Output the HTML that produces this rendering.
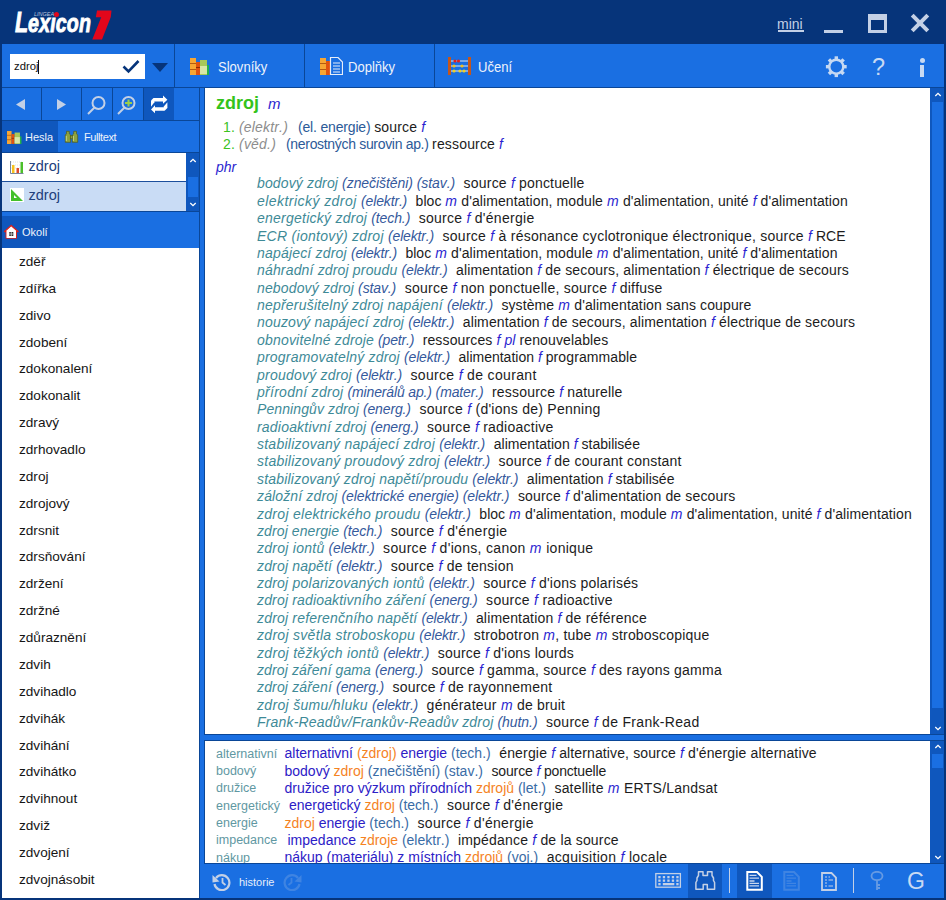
<!DOCTYPE html>
<html><head><meta charset="utf-8"><title>Lexicon 7</title><style>
*{margin:0;padding:0;box-sizing:border-box}
html,body{width:946px;height:900px;overflow:hidden;background:#06347a;font-family:"Liberation Sans",sans-serif;font-kerning:none}
.a{position:absolute}
.t{position:absolute;white-space:pre;line-height:17px}
i{font-style:italic}
.g{color:#2b1fd0;font-style:italic}
.ph{color:#3e8a97;font-style:italic}
.dm{color:#35599c;font-style:italic}
.tr{color:#1c1c1c}
.gap{display:inline-block;width:8.5px}
.bl{color:#5f98a2}
.sn{color:#3cc21f}
.sg{color:#8d8d8d;font-style:italic}
.sd{color:#2c5a98}
.be{color:#2c20c6}
.or{color:#f5831f}
.bd{color:#3a6ca6}
</style></head><body>
<div class="a" style="left:0;top:0;width:946px;height:44px;background:#06347a"></div>
<div class="a" style="left:14.5px;top:4px;font:italic bold 29px/36px 'Liberation Sans';color:#fff;-webkit-text-stroke:0.9px #fff;transform:scaleX(0.74);transform-origin:0 0;white-space:nowrap">L<span style="font-size:26.5px;letter-spacing:0.2px">exıcon</span></div>
<svg class="a" style="left:90px;top:8px" width="24" height="34" viewBox="90 8 24 34"><path d="M97 10.5H111.5L110.8 17L102 39.5H92.3L101.2 17.2H95.8Z" fill="#e3061b"/></svg>
<div class="a" style="left:53.5px;top:11.5px;width:5px;height:5px;border-radius:3px;background:#e3061b"></div>
<div class="a" style="left:34px;top:11px;font:italic 5.5px/6px 'Liberation Sans';color:#b8c4dc">LINGEA</div>
<div class="a" style="left:777px;top:16px;font:14px/16px 'Liberation Sans';color:#c3d0e6">mini</div>
<div class="a" style="left:778px;top:30px;width:26px;height:2px;background:#c3d0e6"></div>
<div class="a" style="left:824px;top:30px;width:19px;height:3px;background:#c3d0e6"></div>
<div class="a" style="left:868px;top:14px;width:19px;height:19px;border:3px solid #c3d0e6;border-top-width:6px"></div>
<svg class="a" style="left:910px;top:13px" width="20" height="20" viewBox="0 0 20 20"><path d="M2.2 2.2L17.8 17.8M17.8 2.2L2.2 17.8" stroke="#c3d0e6" stroke-width="4"/></svg>
<div class="a" style="left:2px;top:44px;width:942px;height:43px;background:#1a6fe2"></div>
<div class="a" style="left:2px;top:87px;width:942px;height:1px;background:#0a4697"></div>
<div class="a" style="left:10px;top:54px;width:135px;height:25px;background:#fff"></div>
<div class="t" style="left:14px;top:57.5px;font-size:11.3px;color:#111">zdroj</div>
<div class="a" style="left:38px;top:60px;width:1px;height:14px;background:#111"></div>
<svg class="a" style="left:122px;top:59px" width="18" height="15" viewBox="0 0 18 15"><path d="M1.5 7.5L6.5 12.5L16.5 2" fill="none" stroke="#06347a" stroke-width="2.6"/></svg>
<svg class="a" style="left:152px;top:63px" width="16" height="9" viewBox="0 0 16 9"><path d="M0 0H16L8 9Z" fill="#06347a"/></svg>
<div class="a" style="left:174px;top:44px;width:1px;height:43px;background:#0a4697"></div>
<div class="a" style="left:304px;top:44px;width:1px;height:43px;background:#0a4697"></div>
<div class="a" style="left:434px;top:44px;width:1px;height:43px;background:#0a4697"></div>
<div class="a" style="left:174px;top:88px;width:1px;height:33px;background:#0a4697"></div>
<svg class="a" style="left:190px;top:58px" width="21" height="17" viewBox="0 0 21 17"><rect x="0" y="0" width="6" height="17" fill="#f7a633"/><rect x="0" y="5" width="6" height="1" fill="#b55a10"/><rect x="0" y="11" width="6" height="1" fill="#b55a10"/><rect x="6" y="4" width="4" height="13" fill="#e0520f"/><rect x="6" y="9" width="4" height="1" fill="#8a2a05"/><rect x="10" y="2" width="7" height="15" fill="#a8c85a"/><rect x="10" y="8" width="7" height="8" fill="#d8e6a8"/><rect x="17" y="7" width="2" height="10" fill="#24b04a"/></svg>
<div class="t" style="left:218px;top:58.3px;font-size:15px;color:#eef3fb;transform:scaleX(0.87);transform-origin:0 0">Slovníky</div>
<svg class="a" style="left:320px;top:57px" width="23" height="18" viewBox="0 0 23 18"><rect x="0" y="1" width="6" height="17" fill="#f7a633"/><rect x="0" y="6" width="6" height="1" fill="#b55a10"/><rect x="0" y="12" width="6" height="1" fill="#b55a10"/><rect x="6" y="4" width="5" height="14" fill="#e0520f"/><path d="M10.5 0.5H18L22.5 5V17.5H10.5Z" fill="#1a6fe2" stroke="#e8eef8" stroke-width="1.2"/><path d="M13 6H20M13 9H20M13 12H20M13 15H20" stroke="#e8eef8" stroke-width="1"/></svg>
<div class="t" style="left:348px;top:58.3px;font-size:15px;color:#eef3fb;transform:scaleX(0.87);transform-origin:0 0">Doplňky</div>
<svg class="a" style="left:448px;top:57px" width="23" height="18" viewBox="0 0 23 18"><rect x="0" y="0" width="3" height="18" fill="#c4561c"/><rect x="20" y="0" width="3" height="18" fill="#c4561c"/><path d="M3 4H20M3 9H20M3 14H20" stroke="#dfe6f0" stroke-width="1"/><circle cx="7" cy="4" r="1.6" fill="#e02020"/><circle cx="10.5" cy="4" r="1.6" fill="#e02020"/><circle cx="6" cy="9" r="1.6" fill="#f0c020"/><circle cx="14" cy="9" r="1.6" fill="#f0c020"/><circle cx="6" cy="14" r="1.6" fill="#f0d020"/><circle cx="12" cy="14" r="1.6" fill="#f0d020"/><circle cx="16" cy="14" r="1.6" fill="#f0d020"/></svg>
<div class="t" style="left:478px;top:58.3px;font-size:15px;color:#eef3fb;transform:scaleX(0.87);transform-origin:0 0">Učení</div>
<svg class="a" style="left:822px;top:52px" width="30" height="30" viewBox="822 52 30 30"><g fill="#c6d9f3"><rect x="834.6" y="56.3" width="3.4" height="4" transform="rotate(0 836.3 66.7)"/><rect x="834.6" y="56.3" width="3.4" height="4" transform="rotate(45 836.3 66.7)"/><rect x="834.6" y="56.3" width="3.4" height="4" transform="rotate(90 836.3 66.7)"/><rect x="834.6" y="56.3" width="3.4" height="4" transform="rotate(135 836.3 66.7)"/><rect x="834.6" y="56.3" width="3.4" height="4" transform="rotate(180 836.3 66.7)"/><rect x="834.6" y="56.3" width="3.4" height="4" transform="rotate(225 836.3 66.7)"/><rect x="834.6" y="56.3" width="3.4" height="4" transform="rotate(270 836.3 66.7)"/><rect x="834.6" y="56.3" width="3.4" height="4" transform="rotate(315 836.3 66.7)"/></g><circle cx="836.3" cy="66.7" r="7" fill="none" stroke="#c6d9f3" stroke-width="2.4"/></svg>
<div class="t" style="left:872px;top:54px;font:23.5px/26px 'Liberation Sans';color:#c8daf3">?</div>
<div class="a" style="left:919.5px;top:57.5px;width:5.5px;height:5.5px;border-radius:3px;background:#c8daf3"></div>
<div class="a" style="left:920.3px;top:65px;width:4.2px;height:11.5px;background:#c8daf3"></div>
<div class="a" style="left:2px;top:88px;width:942px;height:810px;background:#1a6fe2"></div>
<div class="a" style="left:2px;top:88px;width:198px;height:810px;background:#1a6fe2"></div>
<div class="a" style="left:199px;top:88px;width:1px;height:810px;background:#0a4697"></div>
<div class="a" style="left:41px;top:88px;width:1px;height:33px;background:#0a4697"></div>
<div class="a" style="left:81px;top:88px;width:1px;height:33px;background:#0a4697"></div>
<div class="a" style="left:112px;top:88px;width:1px;height:33px;background:#0a4697"></div>
<div class="a" style="left:143px;top:88px;width:1px;height:33px;background:#0a4697"></div>
<div class="a" style="left:144px;top:88px;width:30px;height:32px;background:#0f57bd"></div>
<div class="a" style="left:2px;top:120px;width:197px;height:1px;background:#0a4697"></div>
<svg class="a" style="left:16px;top:99px" width="9" height="11" viewBox="0 0 9 11"><path d="M9 0V11L0 5.5Z" fill="#c3d0e6"/></svg>
<svg class="a" style="left:57px;top:99px" width="9" height="11" viewBox="0 0 9 11"><path d="M0 0V11L9 5.5Z" fill="#c3d0e6"/></svg>
<svg class="a" style="left:86px;top:95px" width="20" height="20" viewBox="0 0 20 20"><circle cx="12.5" cy="8" r="6" fill="none" stroke="#c3d0e6" stroke-width="2"/><path d="M8.5 12.5L2 19" stroke="#c3d0e6" stroke-width="2"/></svg>
<svg class="a" style="left:116px;top:95px" width="20" height="20" viewBox="0 0 20 20"><circle cx="12.5" cy="8" r="6" fill="none" stroke="#c3d0e6" stroke-width="2"/><path d="M8.5 12.5L2 19" stroke="#c3d0e6" stroke-width="2"/><path d="M12.5 4.5V11.5M9 8H16" stroke="#9ccf4a" stroke-width="2"/></svg>
<svg class="a" style="left:144px;top:90px" width="30" height="30" viewBox="144 90 30 30"><g fill="#fff"><path d="M154 98H163V95.6L167.4 99.7L163 103.8V101.4H154Z"/><path d="M151 100.5L153.5 98H154.4V102.3L151 106.7Z"/><path d="M164 107.2H155V105.2L151 109.4L155 113.2V110.8H164Z"/><path d="M167.4 102.3V108L164.6 110.8H163.8V106.6Z"/></g></svg>
<div class="a" style="left:2px;top:121px;width:56px;height:31px;background:#0f57bd"></div>
<svg class="a" style="left:7px;top:131px" width="16" height="13" viewBox="0 0 21 17"><rect x="0" y="0" width="6" height="17" fill="#f7a633"/><rect x="0" y="5" width="6" height="1" fill="#b55a10"/><rect x="0" y="11" width="6" height="1" fill="#b55a10"/><rect x="6" y="4" width="4" height="13" fill="#e0520f"/><rect x="6" y="9" width="4" height="1" fill="#8a2a05"/><rect x="10" y="2" width="7" height="15" fill="#a8c85a"/><rect x="10" y="8" width="7" height="8" fill="#d8e6a8"/><rect x="17" y="7" width="2" height="10" fill="#24b04a"/></svg>
<div class="t" style="left:25px;top:129px;font-size:11px;color:#eef3fb">Hesla</div>
<svg class="a" style="left:64px;top:130px" width="15" height="14" viewBox="64 130 15 14"><g fill="#8fa23e" stroke="#4d5a1c" stroke-width="0.7"><path d="M66.5 131.3H69.3V133.8L70.6 135V142.3H65.3V135L66.5 133.8Z"/><path d="M73.7 131.3H76.5V133.8L77.7 135V142.3H72.4V135L73.7 133.8Z"/><rect x="70.3" y="135.8" width="2.4" height="3"/></g><path d="M66.3 136V141M73.4 136V141" stroke="#c8d890" stroke-width="0.9"/></svg>
<div class="t" style="left:84px;top:129px;font-size:11px;color:#eef3fb;letter-spacing:-0.4px">Fulltext</div>
<div class="a" style="left:2px;top:152px;width:197px;height:1px;background:#0a4697"></div>
<div class="a" style="left:2px;top:153px;width:184px;height:28px;background:#fff"></div>
<div class="a" style="left:2px;top:181px;width:184px;height:1px;background:#1c4f9c"></div>
<div class="a" style="left:2px;top:182px;width:184px;height:29px;background:#c9dcf5"></div>
<div class="a" style="left:2px;top:211px;width:197px;height:1px;background:#0a4697"></div>
<div class="a" style="left:186px;top:153px;width:13px;height:58px;background:#0f57bd"></div>
<div class="a" style="left:187.5px;top:177px;width:10.5px;height:20px;background:#1a6fe2"></div>
<svg class="a" style="left:189px;top:158px" width="8" height="5" viewBox="0 0 8 5"><path d="M1.3 4L4 1.3L6.7 4" fill="none" stroke="#fff" stroke-width="1.3"/></svg>
<svg class="a" style="left:189px;top:202px" width="8" height="5" viewBox="0 0 8 5"><path d="M1.3 1L4 3.7L6.7 1" fill="none" stroke="#fff" stroke-width="1.3"/></svg>
<svg class="a" style="left:10px;top:160px" width="14" height="14" viewBox="0 0 14 14"><path d="M1 2H13M1 5H13M1 8H13" stroke="#d5dbe3" stroke-width="0.8" stroke-dasharray="1 1"/><rect x="2" y="5" width="2.5" height="8" fill="#f7c21c"/><rect x="6.5" y="8" width="2.5" height="5" fill="#de4a2a"/><rect x="10.5" y="2" width="2.5" height="11" fill="#4cbf2a"/><path d="M0.5 1V13.5H13.5" fill="none" stroke="#6a7890" stroke-width="0.9"/></svg>
<div class="t" style="left:28.5px;top:158px;font-size:14.5px;color:#22407c">zdroj</div>
<svg class="a" style="left:10px;top:188px" width="14" height="14" viewBox="0 0 14 14"><rect width="14" height="14" fill="#fff"/><path d="M1 1V13H13Z" fill="#44c02a"/><path d="M4 7V10H7Z" fill="#fff"/></svg>
<div class="t" style="left:28.5px;top:187px;font-size:14.5px;color:#22407c">zdroj</div>
<div class="a" style="left:2px;top:216px;width:48px;height:32px;background:#0f57bd"></div>
<svg class="a" style="left:4px;top:224px" width="16" height="15" viewBox="4 224 16 15"><path d="M11.2 225.5L18 231.5H16.3V238H6.2V231.5H4.5Z" fill="#fff" stroke="#d8201c" stroke-width="1.4" stroke-linejoin="round"/><path d="M6.5 231.3L11.2 227.2L16 231.3V238H6.5Z" fill="#fff"/><rect x="9.3" y="232" width="4" height="4" fill="#2a2a2a"/><path d="M11.3 232V236M9.3 234H13.3" stroke="#fff" stroke-width="0.6"/></svg>
<div class="t" style="left:22px;top:223.5px;font-size:11px;color:#eef3fb">Okolí</div>
<div class="a" style="left:2px;top:248px;width:197px;height:650px;background:#fff"></div>
<div class="t" style="left:19px;top:252.90px;font-size:13.6px;color:#151515">zděř</div>
<div class="t" style="left:19px;top:279.77px;font-size:13.6px;color:#151515">zdířka</div>
<div class="t" style="left:19px;top:306.64px;font-size:13.6px;color:#151515">zdivo</div>
<div class="t" style="left:19px;top:333.51px;font-size:13.6px;color:#151515">zdobení</div>
<div class="t" style="left:19px;top:360.38px;font-size:13.6px;color:#151515">zdokonalení</div>
<div class="t" style="left:19px;top:387.25px;font-size:13.6px;color:#151515">zdokonalit</div>
<div class="t" style="left:19px;top:414.12px;font-size:13.6px;color:#151515">zdravý</div>
<div class="t" style="left:19px;top:440.99px;font-size:13.6px;color:#151515">zdrhovadlo</div>
<div class="t" style="left:19px;top:467.86px;font-size:13.6px;color:#151515">zdroj</div>
<div class="t" style="left:19px;top:494.73px;font-size:13.6px;color:#151515">zdrojový</div>
<div class="t" style="left:19px;top:521.60px;font-size:13.6px;color:#151515">zdrsnit</div>
<div class="t" style="left:19px;top:548.47px;font-size:13.6px;color:#151515">zdrsňování</div>
<div class="t" style="left:19px;top:575.34px;font-size:13.6px;color:#151515">zdržení</div>
<div class="t" style="left:19px;top:602.21px;font-size:13.6px;color:#151515">zdržné</div>
<div class="t" style="left:19px;top:629.08px;font-size:13.6px;color:#151515">zdůraznění</div>
<div class="t" style="left:19px;top:655.95px;font-size:13.6px;color:#151515">zdvih</div>
<div class="t" style="left:19px;top:682.82px;font-size:13.6px;color:#151515">zdvihadlo</div>
<div class="t" style="left:19px;top:709.69px;font-size:13.6px;color:#151515">zdvihák</div>
<div class="t" style="left:19px;top:736.56px;font-size:13.6px;color:#151515">zdvihání</div>
<div class="t" style="left:19px;top:763.43px;font-size:13.6px;color:#151515">zdvihátko</div>
<div class="t" style="left:19px;top:790.30px;font-size:13.6px;color:#151515">zdvihnout</div>
<div class="t" style="left:19px;top:817.17px;font-size:13.6px;color:#151515">zdviž</div>
<div class="t" style="left:19px;top:844.04px;font-size:13.6px;color:#151515">zdvojení</div>
<div class="t" style="left:19px;top:870.91px;font-size:13.6px;color:#151515">zdvojnásobit</div>
<div class="a" style="left:204px;top:88px;width:1px;height:646px;background:#0a4697"></div>
<div class="a" style="left:205px;top:88px;width:725px;height:646px;background:#fff"></div>
<div class="a" style="left:930px;top:88px;width:14px;height:646px;background:#0f57bd"></div>
<div class="a" style="left:931.5px;top:102px;width:11.3px;height:606px;background:#1a6fe2"></div>
<svg class="a" style="left:934px;top:92px" width="8" height="5" viewBox="0 0 8 5"><path d="M1.3 4L4 1.3L6.7 4" fill="none" stroke="#fff" stroke-width="1.3"/></svg>
<svg class="a" style="left:934px;top:726px" width="8" height="5" viewBox="0 0 8 5"><path d="M1.3 1L4 3.7L6.7 1" fill="none" stroke="#fff" stroke-width="1.3"/></svg>
<div class="t" style="left:216px;top:91.76px;font-size:18px;line-height:22px"><b style="color:#34c31b">zdroj</b></div>
<div class="t" style="left:268px;top:95.30px;font-size:15px;line-height:17px"><span class="g">m</span></div>
<div class="t" style="left:223px;top:118.65px;font-size:14px;line-height:17px"><span class="sn" style="letter-spacing:0.145px">1. </span><span class="sg" style="letter-spacing:0.172px">(elektr.)</span><span class="gap" style="width:10px"></span><span class="sd" style="font-size:14px;letter-spacing:-0.178px">(el. energie) </span><span class="tr" style="letter-spacing:0.156px">source </span><span class="g" style="letter-spacing:0.110px">f</span></div>
<div class="t" style="left:223px;top:135.65px;font-size:14px;line-height:17px"><span class="sn" style="letter-spacing:0.145px">2. </span><span class="sg" style="letter-spacing:0.202px">(věd.)</span><span class="gap" style="width:10px"></span><span class="sd" style="font-size:14px;letter-spacing:-0.32px">(nerostných surovin ap.) </span><span class="tr" style="letter-spacing:0.164px">ressource </span><span class="g" style="letter-spacing:0.110px">f</span></div>
<div class="t" style="left:216px;top:159.45px;font-size:14px;line-height:17px"><span class="g">phr</span></div>
<div class="t" style="left:257px;top:175.45px;font-size:14px;line-height:17px"><span class="ph" style="letter-spacing:0.141px">bodový zdroj </span><span class="dm" style="letter-spacing:-0.068px">(znečištěni) (stav.)</span><span class="gap"></span><span class="tr" style="letter-spacing:0.203px">source </span><span class="g" style="letter-spacing:0.158px">f</span><span class="tr" style="letter-spacing:0.164px"> ponctuelle</span></div>
<div class="t" style="left:257px;top:192.82px;font-size:14px;line-height:17px"><span class="ph" style="letter-spacing:0.449px">elektrický zdroj </span><span class="dm" style="letter-spacing:-0.161px">(elektr.)</span><span class="gap"></span><span class="tr" style="letter-spacing:0.030px">bloc </span><span class="g" style="letter-spacing:0.282px">m</span><span class="tr" style="letter-spacing:0.093px"> d&#x27;alimentation, module </span><span class="g" style="letter-spacing:0.282px">m</span><span class="tr" style="letter-spacing:0.081px"> d&#x27;alimentation, unité </span><span class="g" style="letter-spacing:0.055px">f</span><span class="tr" style="letter-spacing:0.088px"> d&#x27;alimentation</span></div>
<div class="t" style="left:257px;top:210.20px;font-size:14px;line-height:17px"><span class="ph" style="letter-spacing:0.249px">energetický zdroj </span><span class="dm" style="letter-spacing:-0.097px">(tech.)</span><span class="gap"></span><span class="tr" style="letter-spacing:0.256px">source </span><span class="g" style="letter-spacing:0.210px">f</span><span class="tr" style="letter-spacing:0.295px"> d&#x27;énergie</span></div>
<div class="t" style="left:257px;top:227.57px;font-size:14px;line-height:17px"><span class="ph" style="letter-spacing:0.287px">ECR (iontový) zdroj </span><span class="dm" style="letter-spacing:-0.161px">(elektr.)</span><span class="gap"></span><span class="tr" style="letter-spacing:0.270px">source </span><span class="g" style="letter-spacing:0.225px">f</span><span class="tr" style="letter-spacing:0.257px"> à résonance cyclotronique électronique, source </span><span class="g" style="letter-spacing:0.225px">f</span><span class="tr" style="letter-spacing:0.003px"> RCE</span></div>
<div class="t" style="left:257px;top:244.95px;font-size:14px;line-height:17px"><span class="ph" style="letter-spacing:0.190px">napájecí zdroj </span><span class="dm" style="letter-spacing:-0.161px">(elektr.)</span><span class="gap"></span><span class="tr" style="letter-spacing:0.030px">bloc </span><span class="g" style="letter-spacing:0.282px">m</span><span class="tr" style="letter-spacing:0.093px"> d&#x27;alimentation, module </span><span class="g" style="letter-spacing:0.282px">m</span><span class="tr" style="letter-spacing:0.081px"> d&#x27;alimentation, unité </span><span class="g" style="letter-spacing:0.055px">f</span><span class="tr" style="letter-spacing:0.088px"> d&#x27;alimentation</span></div>
<div class="t" style="left:257px;top:262.32px;font-size:14px;line-height:17px"><span class="ph" style="letter-spacing:0.165px">náhradní zdroj proudu </span><span class="dm" style="letter-spacing:-0.161px">(elektr.)</span><span class="gap"></span><span class="tr" style="letter-spacing:0.139px">alimentation </span><span class="g" style="letter-spacing:0.125px">f</span><span class="tr" style="letter-spacing:0.148px"> de secours, alimentation </span><span class="g" style="letter-spacing:0.125px">f</span><span class="tr" style="letter-spacing:0.152px"> électrique de secours</span></div>
<div class="t" style="left:257px;top:279.70px;font-size:14px;line-height:17px"><span class="ph" style="letter-spacing:0.151px">nebodový zdroj </span><span class="dm" style="letter-spacing:-0.127px">(stav.)</span><span class="gap"></span><span class="tr" style="letter-spacing:0.275px">source </span><span class="g" style="letter-spacing:0.230px">f</span><span class="tr" style="letter-spacing:0.259px"> non ponctuelle, source </span><span class="g" style="letter-spacing:0.230px">f</span><span class="tr" style="letter-spacing:0.227px"> diffuse</span></div>
<div class="t" style="left:257px;top:297.07px;font-size:14px;line-height:17px"><span class="ph" style="letter-spacing:0.208px">nepřerušitelný zdroj napájení </span><span class="dm" style="letter-spacing:-0.161px">(elektr.)</span><span class="gap"></span><span class="tr" style="letter-spacing:0.099px">système </span><span class="g" style="letter-spacing:0.314px">m</span><span class="tr" style="letter-spacing:0.126px"> d&#x27;alimentation sans coupure</span></div>
<div class="t" style="left:257px;top:314.45px;font-size:14px;line-height:17px"><span class="ph" style="letter-spacing:0.179px">nouzový napájecí zdroj </span><span class="dm" style="letter-spacing:-0.161px">(elektr.)</span><span class="gap"></span><span class="tr" style="letter-spacing:0.131px">alimentation </span><span class="g" style="letter-spacing:0.117px">f</span><span class="tr" style="letter-spacing:0.140px"> de secours, alimentation </span><span class="g" style="letter-spacing:0.117px">f</span><span class="tr" style="letter-spacing:0.144px"> électrique de secours</span></div>
<div class="t" style="left:257px;top:331.82px;font-size:14px;line-height:17px"><span class="ph" style="letter-spacing:0.188px">obnovitelné zdroje </span><span class="dm" style="letter-spacing:-0.191px">(petr.)</span><span class="gap"></span><span class="tr" style="letter-spacing:0.139px">ressources </span><span class="g" style="letter-spacing:0.071px">f pl</span><span class="tr" style="letter-spacing:0.128px"> renouvelables</span></div>
<div class="t" style="left:257px;top:349.20px;font-size:14px;line-height:17px"><span class="ph" style="letter-spacing:0.209px">programovatelný zdroj </span><span class="dm" style="letter-spacing:-0.161px">(elektr.)</span><span class="gap"></span><span class="tr" style="letter-spacing:-0.001px">alimentation </span><span class="g" style="letter-spacing:-0.016px">f</span><span class="tr" style="letter-spacing:0.093px"> programmable</span></div>
<div class="t" style="left:257px;top:366.57px;font-size:14px;line-height:17px"><span class="ph" style="letter-spacing:0.219px">proudový zdroj </span><span class="dm" style="letter-spacing:-0.161px">(elektr.)</span><span class="gap"></span><span class="tr" style="letter-spacing:0.324px">source </span><span class="g" style="letter-spacing:0.279px">f</span><span class="tr" style="letter-spacing:0.346px"> de courant</span></div>
<div class="t" style="left:257px;top:383.95px;font-size:14px;line-height:17px"><span class="ph" style="letter-spacing:0.275px">přírodní zdroj </span><span class="dm" style="letter-spacing:-0.142px">(minerálů ap.) (mater.)</span><span class="gap"></span><span class="tr" style="letter-spacing:0.188px">ressource </span><span class="g" style="letter-spacing:0.134px">f</span><span class="tr" style="letter-spacing:0.165px"> naturelle</span></div>
<div class="t" style="left:257px;top:401.32px;font-size:14px;line-height:17px"><span class="ph" style="letter-spacing:0.101px">Penningův zdroj </span><span class="dm" style="letter-spacing:-0.128px">(energ.)</span><span class="gap"></span><span class="tr" style="letter-spacing:0.266px">source </span><span class="g" style="letter-spacing:0.221px">f</span><span class="tr" style="letter-spacing:0.256px"> (d&#x27;ions de) Penning</span></div>
<div class="t" style="left:257px;top:418.70px;font-size:14px;line-height:17px"><span class="ph" style="letter-spacing:0.199px">radioaktivní zdroj </span><span class="dm" style="letter-spacing:-0.128px">(energ.)</span><span class="gap"></span><span class="tr" style="letter-spacing:0.281px">source </span><span class="g" style="letter-spacing:0.235px">f</span><span class="tr" style="letter-spacing:0.242px"> radioactive</span></div>
<div class="t" style="left:257px;top:436.07px;font-size:14px;line-height:17px"><span class="ph" style="letter-spacing:0.242px">stabilizovaný napájecí zdroj </span><span class="dm" style="letter-spacing:-0.161px">(elektr.)</span><span class="gap"></span><span class="tr" style="letter-spacing:0.057px">alimentation </span><span class="g" style="letter-spacing:0.042px">f</span><span class="tr" style="letter-spacing:-0.000px"> stabilisée</span></div>
<div class="t" style="left:257px;top:453.45px;font-size:14px;line-height:17px"><span class="ph" style="letter-spacing:0.253px">stabilizovaný proudový zdroj </span><span class="dm" style="letter-spacing:-0.161px">(elektr.)</span><span class="gap"></span><span class="tr" style="letter-spacing:0.231px">source </span><span class="g" style="letter-spacing:0.185px">f</span><span class="tr" style="letter-spacing:0.232px"> de courant constant</span></div>
<div class="t" style="left:257px;top:470.82px;font-size:14px;line-height:17px"><span class="ph" style="letter-spacing:0.198px">stabilizovaný zdroj napětí/proudu </span><span class="dm" style="letter-spacing:-0.161px">(elektr.)</span><span class="gap"></span><span class="tr" style="letter-spacing:0.113px">alimentation </span><span class="g" style="letter-spacing:0.098px">f</span><span class="tr" style="letter-spacing:0.056px"> stabilisée</span></div>
<div class="t" style="left:257px;top:488.20px;font-size:14px;line-height:17px"><span class="ph" style="letter-spacing:0.137px">záložní zdroj </span><span class="dm" style="letter-spacing:-0.080px">(elektrické energie) (elektr.)</span><span class="gap"></span><span class="tr" style="letter-spacing:0.173px">source </span><span class="g" style="letter-spacing:0.128px">f</span><span class="tr" style="letter-spacing:0.163px"> d&#x27;alimentation de secours</span></div>
<div class="t" style="left:257px;top:505.57px;font-size:14px;line-height:17px"><span class="ph" style="letter-spacing:0.288px">zdroj elektrického proudu </span><span class="dm" style="letter-spacing:-0.161px">(elektr.)</span><span class="gap"></span><span class="tr" style="letter-spacing:0.034px">bloc </span><span class="g" style="letter-spacing:0.286px">m</span><span class="tr" style="letter-spacing:0.098px"> d&#x27;alimentation, module </span><span class="g" style="letter-spacing:0.286px">m</span><span class="tr" style="letter-spacing:0.085px"> d&#x27;alimentation, unité </span><span class="g" style="letter-spacing:0.059px">f</span><span class="tr" style="letter-spacing:0.093px"> d&#x27;alimentation</span></div>
<div class="t" style="left:257px;top:522.95px;font-size:14px;line-height:17px"><span class="ph" style="letter-spacing:0.098px">zdroj energie </span><span class="dm" style="letter-spacing:-0.097px">(tech.)</span><span class="gap"></span><span class="tr" style="letter-spacing:0.311px">source </span><span class="g" style="letter-spacing:0.266px">f</span><span class="tr" style="letter-spacing:0.350px"> d&#x27;énergie</span></div>
<div class="t" style="left:257px;top:540.32px;font-size:14px;line-height:17px"><span class="ph" style="letter-spacing:0.260px">zdroj iontů </span><span class="dm" style="letter-spacing:-0.161px">(elektr.)</span><span class="gap"></span><span class="tr" style="letter-spacing:0.318px">source </span><span class="g" style="letter-spacing:0.273px">f</span><span class="tr" style="letter-spacing:0.306px"> d&#x27;ions, canon </span><span class="g" style="letter-spacing:0.500px">m</span><span class="tr" style="letter-spacing:0.282px"> ionique</span></div>
<div class="t" style="left:257px;top:557.70px;font-size:14px;line-height:17px"><span class="ph" style="letter-spacing:0.166px">zdroj napětí </span><span class="dm" style="letter-spacing:-0.161px">(elektr.)</span><span class="gap"></span><span class="tr" style="letter-spacing:0.261px">source </span><span class="g" style="letter-spacing:0.216px">f</span><span class="tr" style="letter-spacing:0.242px"> de tension</span></div>
<div class="t" style="left:257px;top:575.07px;font-size:14px;line-height:17px"><span class="ph" style="letter-spacing:0.220px">zdroj polarizovaných iontů </span><span class="dm" style="letter-spacing:-0.161px">(elektr.)</span><span class="gap"></span><span class="tr" style="letter-spacing:0.240px">source </span><span class="g" style="letter-spacing:0.194px">f</span><span class="tr" style="letter-spacing:0.205px"> d&#x27;ions polarisés</span></div>
<div class="t" style="left:257px;top:592.45px;font-size:14px;line-height:17px"><span class="ph" style="letter-spacing:0.161px">zdroj radioaktivního záření </span><span class="dm" style="letter-spacing:-0.128px">(energ.)</span><span class="gap"></span><span class="tr" style="letter-spacing:0.296px">source </span><span class="g" style="letter-spacing:0.250px">f</span><span class="tr" style="letter-spacing:0.257px"> radioactive</span></div>
<div class="t" style="left:257px;top:609.82px;font-size:14px;line-height:17px"><span class="ph" style="letter-spacing:0.187px">zdroj referenčního napětí </span><span class="dm" style="letter-spacing:-0.161px">(elektr.)</span><span class="gap"></span><span class="tr" style="letter-spacing:0.162px">alimentation </span><span class="g" style="letter-spacing:0.147px">f</span><span class="tr" style="letter-spacing:0.230px"> de référence</span></div>
<div class="t" style="left:257px;top:627.20px;font-size:14px;line-height:17px"><span class="ph" style="letter-spacing:0.298px">zdroj světla stroboskopu </span><span class="dm" style="letter-spacing:-0.161px">(elektr.)</span><span class="gap"></span><span class="tr" style="letter-spacing:0.232px">strobotron </span><span class="g" style="letter-spacing:0.381px">m</span><span class="tr" style="letter-spacing:0.198px">, tube </span><span class="g" style="letter-spacing:0.381px">m</span><span class="tr" style="letter-spacing:0.187px"> stroboscopique</span></div>
<div class="t" style="left:257px;top:644.57px;font-size:14px;line-height:17px"><span class="ph" style="letter-spacing:0.318px">zdroj těžkých iontů </span><span class="dm" style="letter-spacing:-0.161px">(elektr.)</span><span class="gap"></span><span class="tr" style="letter-spacing:0.210px">source </span><span class="g" style="letter-spacing:0.165px">f</span><span class="tr" style="letter-spacing:0.194px"> d&#x27;ions lourds</span></div>
<div class="t" style="left:257px;top:661.95px;font-size:14px;line-height:17px"><span class="ph" style="letter-spacing:0.114px">zdroj záření gama </span><span class="dm" style="letter-spacing:-0.128px">(energ.)</span><span class="gap"></span><span class="tr" style="letter-spacing:0.214px">source </span><span class="g" style="letter-spacing:0.169px">f</span><span class="tr" style="letter-spacing:0.241px"> gamma, source </span><span class="g" style="letter-spacing:0.169px">f</span><span class="tr" style="letter-spacing:0.238px"> des rayons gamma</span></div>
<div class="t" style="left:257px;top:679.32px;font-size:14px;line-height:17px"><span class="ph" style="letter-spacing:0.159px">zdroj záření </span><span class="dm" style="letter-spacing:-0.128px">(energ.)</span><span class="gap"></span><span class="tr" style="letter-spacing:0.186px">source </span><span class="g" style="letter-spacing:0.141px">f</span><span class="tr" style="letter-spacing:0.226px"> de rayonnement</span></div>
<div class="t" style="left:257px;top:696.70px;font-size:14px;line-height:17px"><span class="ph" style="letter-spacing:0.317px">zdroj šumu/hluku </span><span class="dm" style="letter-spacing:-0.161px">(elektr.)</span><span class="gap"></span><span class="tr" style="letter-spacing:0.241px">générateur </span><span class="g" style="letter-spacing:0.362px">m</span><span class="tr" style="letter-spacing:0.181px"> de bruit</span></div>
<div class="t" style="left:257px;top:714.07px;font-size:14px;line-height:17px"><span class="ph" style="letter-spacing:0.185px">Frank-Readův/Frankův-Readův zdroj </span><span class="dm" style="letter-spacing:-0.066px">(hutn.)</span><span class="gap"></span><span class="tr" style="letter-spacing:0.269px">source </span><span class="g" style="letter-spacing:0.224px">f</span><span class="tr" style="letter-spacing:0.309px"> de Frank-Read</span></div>
<div class="a" style="left:204px;top:734px;width:740px;height:1px;background:#0a4697"></div>
<div class="a" style="left:204px;top:740px;width:740px;height:1px;background:#0a4697"></div>
<div class="a" style="left:204px;top:741px;width:1px;height:122px;background:#0a4697"></div>
<div class="a" style="left:205px;top:741px;width:725px;height:122px;background:#fff"></div>
<div class="a" style="left:930px;top:741px;width:14px;height:122px;background:#0f57bd"></div>
<div class="a" style="left:931.5px;top:754px;width:11px;height:14px;background:#1a6fe2"></div>
<svg class="a" style="left:934px;top:744px" width="8" height="5" viewBox="0 0 8 5"><path d="M1.3 4L4 1.3L6.7 4" fill="none" stroke="#fff" stroke-width="1.3"/></svg>
<svg class="a" style="left:934px;top:855px" width="8" height="5" viewBox="0 0 8 5"><path d="M1.3 1L4 3.7L6.7 1" fill="none" stroke="#fff" stroke-width="1.3"/></svg>
<div class="a" style="left:204px;top:863px;width:740px;height:1px;background:#0a4697"></div>
<div class="a" style="left:205px;top:741px;width:725px;height:122px;overflow:hidden">
<div class="t" style="left:11px;top:4.67px;font-size:12.5px;line-height:17px" ><span class="bl">alternativní</span></div>
<div class="t" style="left:79.5px;top:4.15px;font-size:14px;line-height:17px"><span class="be">alternativní <span class="or">(zdroj)</span> energie <span class="bd">(tech.)</span></span><span class="gap"></span><span class="tr" style="letter-spacing:0.166px">énergie </span><span class="g" style="letter-spacing:0.101px">f</span><span class="tr" style="letter-spacing:0.125px"> alternative, source </span><span class="g" style="letter-spacing:0.101px">f</span><span class="tr" style="letter-spacing:0.148px"> d&#x27;énergie alternative</span></div>
<div class="t" style="left:11px;top:22.02px;font-size:12.5px;line-height:17px" ><span class="bl">bodový</span></div>
<div class="t" style="left:79.5px;top:21.50px;font-size:14px;line-height:17px"><span class="be">bodový <span class="or">zdroj</span> <span class="bd">(znečištění)</span> <span class="bd">(stav.)</span></span><span class="gap"></span><span class="tr" style="letter-spacing:-0.129px">source </span><span class="g" style="letter-spacing:-0.174px">f</span><span class="tr" style="letter-spacing:-0.168px"> ponctuelle</span></div>
<div class="t" style="left:11px;top:39.37px;font-size:12.5px;line-height:17px" ><span class="bl">družice</span></div>
<div class="t" style="left:79.5px;top:38.85px;font-size:14px;line-height:17px"><span class="be">družice pro výzkum přírodních <span class="or">zdrojů</span> <span class="bd">(let.)</span></span><span class="gap"></span><span class="tr" style="letter-spacing:0.193px">satellite </span><span class="g" style="letter-spacing:0.467px">m</span><span class="tr" style="letter-spacing:0.211px"> ERTS/Landsat</span></div>
<div class="t" style="left:11px;top:56.72px;font-size:12.5px;line-height:17px" ><span class="bl">energetický</span></div>
<div class="t" style="left:84.0px;top:56.20px;font-size:14px;line-height:17px"><span class="be">energetický <span class="or">zdroj</span> <span class="bd">(tech.)</span></span><span class="gap"></span><span class="tr" style="letter-spacing:0.289px">source </span><span class="g" style="letter-spacing:0.244px">f</span><span class="tr" style="letter-spacing:0.328px"> d&#x27;énergie</span></div>
<div class="t" style="left:11px;top:74.07px;font-size:12.5px;line-height:17px" ><span class="bl">energie</span></div>
<div class="t" style="left:79.5px;top:73.55px;font-size:14px;line-height:17px"><span class="be"><span class="or">zdroj</span> energie <span class="bd">(tech.)</span></span><span class="gap"></span><span class="tr" style="letter-spacing:0.283px">source </span><span class="g" style="letter-spacing:0.238px">f</span><span class="tr" style="letter-spacing:0.323px"> d&#x27;énergie</span></div>
<div class="t" style="left:11px;top:91.42px;font-size:12.5px;line-height:17px" ><span class="bl">impedance</span></div>
<div class="t" style="left:82.5px;top:90.90px;font-size:14px;line-height:17px"><span class="be">impedance <span class="or">zdroje</span> <span class="bd">(elektr.)</span></span><span class="gap"></span><span class="tr" style="letter-spacing:0.200px">impédance </span><span class="g" style="letter-spacing:0.148px">f</span><span class="tr" style="letter-spacing:0.179px"> de la source</span></div>
<div class="t" style="left:11px;top:108.77px;font-size:12.5px;line-height:17px" ><span class="bl">nákup</span></div>
<div class="t" style="left:79.5px;top:108.25px;font-size:14px;line-height:17px"><span class="be">nákup (materiálu) z místních <span class="or">zdrojů</span> <span class="bd">(voj.)</span></span><span class="gap"></span><span class="tr" style="letter-spacing:0.315px">acquisition </span><span class="g" style="letter-spacing:0.345px">f</span><span class="tr" style="letter-spacing:0.311px"> locale</span></div>
</div>
<div class="a" style="left:200px;top:864px;width:744px;height:34px;background:#1a6fe2"></div>
<svg class="a" style="left:212px;top:873px" width="19" height="18" viewBox="0 0 19 18"><path d="M4 5A7.5 7.5 0 1 1 2.5 11" fill="none" stroke="#c3d0e6" stroke-width="2.2"/><path d="M0.5 2L7.5 8.5L0.5 9.5Z" fill="#c3d0e6"/><path d="M10.5 5V9.5L13.5 12" fill="none" stroke="#c3d0e6" stroke-width="1.8"/></svg>
<div class="t" style="left:239px;top:874px;font-size:11px;color:#e6eefa">historie</div>
<svg class="a" style="left:283px;top:873px;opacity:0.22" width="19" height="18" viewBox="0 0 19 18"><g transform="translate(19 0) scale(-1 1)"><path d="M4 5A7.5 7.5 0 1 1 2.5 11" fill="none" stroke="#c3d0e6" stroke-width="2.2"/><path d="M0.5 2L7.5 8.5L0.5 9.5Z" fill="#c3d0e6"/><path d="M10.5 5V9.5L13.5 12" fill="none" stroke="#c3d0e6" stroke-width="1.8"/></g></svg>
<svg class="a" style="left:654px;top:872px" width="28" height="17" viewBox="654 872 28 17"><rect x="655.8" y="873.6" width="24.6" height="13.6" fill="none" stroke="#c3d0e6" stroke-width="1.3"/><g fill="#c3d0e6"><rect x="658.3" y="876.0" width="2.3" height="2.3"/><rect x="662.8" y="876.0" width="2.3" height="2.3"/><rect x="667.3" y="876.0" width="2.3" height="2.3"/><rect x="671.8" y="876.0" width="2.3" height="2.3"/><rect x="676.3" y="876.0" width="2.3" height="2.3"/><rect x="658.3" y="879.5" width="2.3" height="2.3"/><rect x="662.8" y="879.5" width="2.3" height="2.3"/><rect x="667.3" y="879.5" width="2.3" height="2.3"/><rect x="671.8" y="879.5" width="2.3" height="2.3"/><rect x="676.3" y="879.5" width="2.3" height="2.3"/><rect x="658.3" y="883" width="2.3" height="2.3"/><rect x="662.8" y="883" width="11.5" height="2.3"/><rect x="676.3" y="883" width="2.3" height="2.3"/></g></svg>
<div class="a" style="left:688px;top:864px;width:34px;height:34px;background:#0f57bd"></div>
<svg class="a" style="left:693px;top:869px" width="24" height="23" viewBox="693 869 24 23"><path d="M698.5 871.8H703V875.5H707.5V871.8H712V875.5L713.5 878V880.5L714.6 882.5V889.3H707.3V884.5H703.2V889.3H695.9V882.5L697 880.5V878L698.5 875.5Z" fill="none" stroke="#c3d0e6" stroke-width="1.5" stroke-linejoin="round"/></svg>
<div class="a" style="left:729px;top:868px;width:1px;height:25px;background:#c3d0e6"></div>
<div class="a" style="left:737px;top:864px;width:35px;height:34px;background:#0f57bd"></div>
<svg class="a" style="left:746px;top:871px;opacity:1" width="17" height="20" viewBox="0 0 17 20"><path d="M1.3 1H11L15.8 5.8V18.8H1.3Z" fill="none" stroke="#ffffff" stroke-width="2" stroke-linejoin="miter"/><path d="M3.5 4.3H10.5M3.5 7.2H13M3.5 10H8.5M3.5 12.3H13M3.5 14.8H13" stroke="#c8d6ee" stroke-width="1.3"/></svg>
<svg class="a" style="left:783px;top:871px;opacity:0.22" width="17" height="20" viewBox="0 0 17 20"><path d="M1.3 1H11L15.8 5.8V18.8H1.3Z" fill="none" stroke="#c3d0e6" stroke-width="2" stroke-linejoin="miter"/><path d="M3.5 4.3H10.5M3.5 7.2H13M3.5 10H8.5M3.5 12.3H13M3.5 14.8H13" stroke="#c3d0e6" stroke-width="1.3"/></svg>
<svg class="a" style="left:821px;top:872px" width="16" height="19" viewBox="0 0 16 19"><path d="M1 1H10.5L15 5.5V18H1Z" fill="none" stroke="#c3d0e6" stroke-width="1.8"/><g stroke="#c3d0e6" stroke-width="1.2"><path d="M4 5H6M4 8H6M4 11H6M4 14H6M7.5 8H12M7.5 14H12M7.5 5H9"/></g></svg>
<div class="a" style="left:853px;top:868px;width:1px;height:25px;background:#c3d0e6"></div>
<svg class="a" style="left:870px;top:871px;opacity:0.45" width="15" height="20" viewBox="0 0 15 20"><ellipse cx="7" cy="5" rx="5.5" ry="4.2" fill="none" stroke="#c3d0e6" stroke-width="1.8"/><path d="M7 9V19M7 14H10M7 17H10" stroke="#c3d0e6" stroke-width="1.8"/></svg>
<div class="t" style="left:907px;top:868px;font:23px/26px 'Liberation Sans';color:#c8daf3">G</div>
</body></html>
